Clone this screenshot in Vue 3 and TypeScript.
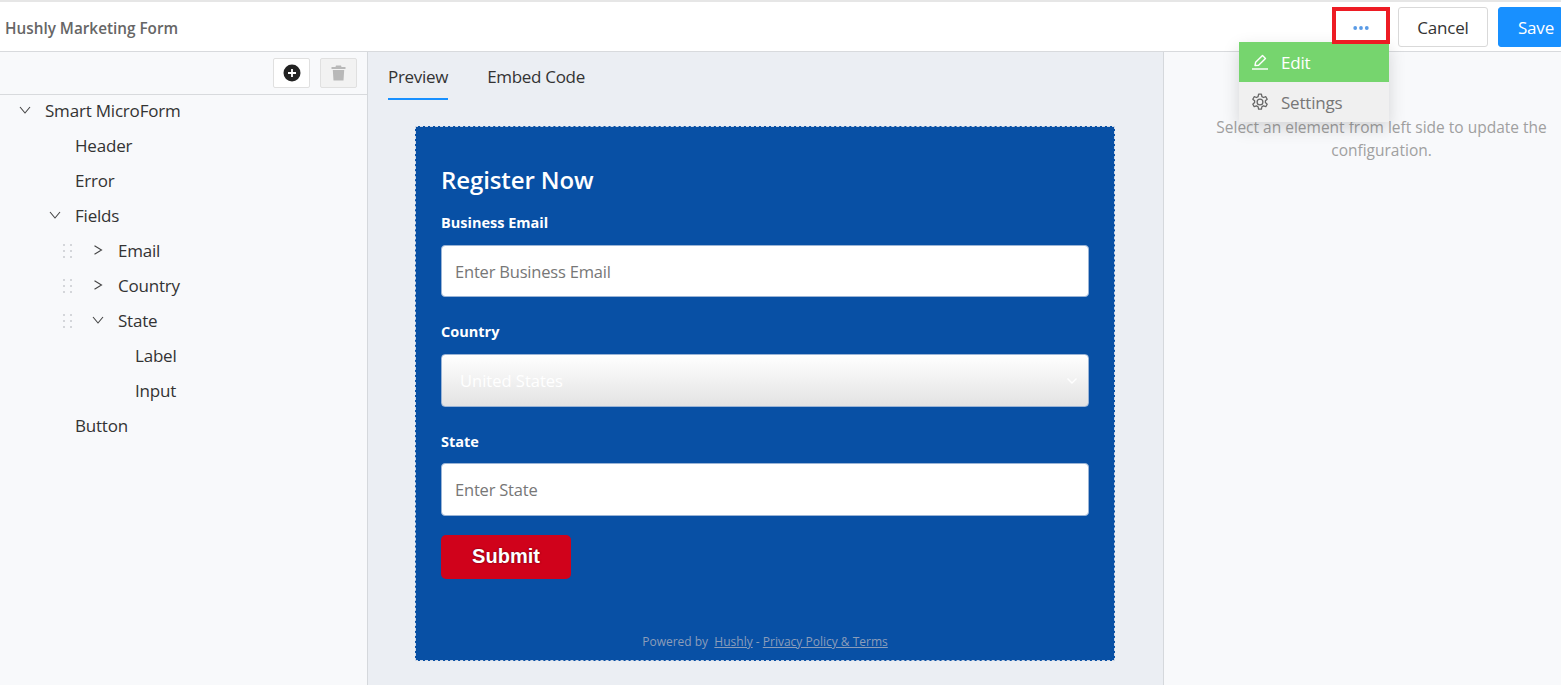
<script setup lang="ts">
interface TreeRow {
  label: string;
  indent: number;
  arrow?: "down" | "right";
  drag?: boolean;
}

const rows: TreeRow[] = [
  { label: "Smart MicroForm", indent: 45, arrow: "down" },
  { label: "Header", indent: 75 },
  { label: "Error", indent: 75 },
  { label: "Fields", indent: 75, arrow: "down" },
  { label: "Email", indent: 118, arrow: "right", drag: true },
  { label: "Country", indent: 118, arrow: "right", drag: true },
  { label: "State", indent: 118, arrow: "down", drag: true },
  { label: "Label", indent: 135 },
  { label: "Input", indent: 135 },
  { label: "Button", indent: 75 },
];
</script>

<template>
  <div class="page">
    <header class="topbar">
      <div class="title">Hushly Marketing Form</div>
      <div class="actions">
        <button class="more">
          <svg width="16" height="4" viewBox="0 0 16 4"><circle cx="2.2" cy="2" r="1.9" /><circle cx="8" cy="2" r="1.9" /><circle cx="13.8" cy="2" r="1.9" /></svg>
        </button>
        <button class="btn">Cancel</button>
        <button class="btn primary">Save</button>
      </div>
    </header>

    <div class="body">
      <aside class="sidebar">
        <div class="toolbar">
          <button class="tool">
            <svg width="18" height="18" viewBox="0 0 18 18">
              <circle cx="9" cy="9" r="8.5" fill="#222" />
              <path d="M9 5v8M5 9h8" stroke="#fff" stroke-width="1.8" />
            </svg>
          </button>
          <button class="tool disabled">
            <svg width="15" height="16" viewBox="0 0 15 16" fill="#b8b8b8">
              <path d="M4.5 2 5 0.5h5l.5 1.5H14.5v2H.5v-2zM1.8 5h11.4l-.7 10.5H2.5z" />
            </svg>
          </button>
        </div>
        <ul class="tree">
          <li v-for="row in rows" :key="row.label" class="row" :style="{ paddingLeft: row.indent + 'px' }">
            <svg v-if="row.drag" class="drag" width="12" height="16" viewBox="0 0 12 16" fill="#d4d6da">
              <rect x="1" y="1" width="2" height="2" /><rect x="8" y="1" width="2" height="2" />
              <rect x="1" y="7" width="2" height="2" /><rect x="8" y="7" width="2" height="2" />
              <rect x="1" y="13" width="2" height="2" /><rect x="8" y="13" width="2" height="2" />
            </svg>
            <svg v-if="row.arrow" class="arrow" :style="{ left: row.indent - 26 + 'px' }" width="12" height="12" viewBox="0 0 12 12" fill="none" stroke="#444" stroke-width="1.1">
              <path v-if="row.arrow === 'down'" d="M1 3 6 9 11 3" />
              <path v-else d="M2.5 1.8 9.5 6 2.5 10.2" />
            </svg>
            {{ row.label }}
          </li>
        </ul>
      </aside>

      <main class="center">
        <nav class="tabs">
          <span class="tab active">Preview</span>
          <span class="tab">Embed Code</span>
        </nav>
        <section class="form">
          <h2>Register Now</h2>
          <label>Business Email</label>
          <div class="input">Enter Business Email</div>
          <label class="next">Country</label>
          <div class="select">
            <span>United States</span>
            <svg width="12" height="8" viewBox="0 0 12 8" fill="none" stroke="#fff" stroke-width="1.4"><path d="M1.5 1.5 6 6l4.5-4.5" /></svg>
          </div>
          <label class="next short">State</label>
          <div class="input tall">Enter State</div>
          <button class="submit">Submit</button>
          <p class="powered">Powered by &nbsp;<u>Hushly</u> - <u>Privacy Policy &amp; Terms</u></p>
        </section>
      </main>

      <aside class="config">
        <p>Select an element from left side to update the configuration.</p>
      </aside>
    </div>

    <div class="menu">
      <div class="item on">
        <svg width="18" height="18" viewBox="0 0 18 18" fill="none" stroke="#fff" stroke-width="1.4">
          <path d="M4 12.5 4.6 9.3 11.5 2.4l3 3L7.6 12.3z" stroke-linejoin="round" />
          <path d="M1 16h16" />
        </svg>
        Edit
      </div>
      <div class="item">
        <svg width="18" height="18" viewBox="0 0 18 18" fill="none" stroke="#666" stroke-width="1.3">
          <path d="M7.6 1.2h2.8l.5 2.4 1.6.9 2.3-.8 1.4 2.5-1.8 1.6v1.8l1.8 1.6-1.4 2.5-2.3-.8-1.6.9-.5 2.4H7.6l-.5-2.4-1.6-.9-2.3.8-1.4-2.5 1.8-1.6V7.8L1.8 6.2l1.4-2.5 2.3.8 1.6-.9z" stroke-linejoin="round" />
          <circle cx="9" cy="9" r="2.9" />
        </svg>
        Settings
      </div>
    </div>
  </div>
</template>

<style>
html,
body {
  margin: 0;
  overflow: hidden;
}
</style>

<style scoped>
.page {
  width: 1561px;
  height: 685px;
  position: relative;
  overflow: hidden;
  display: flex;
  flex-direction: column;
  font-family: "Open Sans", "Noto Sans", sans-serif;
  color: #333;
  background: #f8f9fb;
}

button {
  font-family: inherit;
}

.topbar {
  height: 49px;
  flex: none;
  background: #fff;
  border-top: 2px solid #e6e6e6;
  border-bottom: 1px solid #d8dadd;
  display: flex;
  align-items: flex-start;
  justify-content: space-between;
}

.title {
  padding: 17px 0 0 5px;
  font-size: 15.3px;
  line-height: 19px;
  font-weight: 600;
  color: #666;
}

.actions {
  display: flex;
  flex: none;
  padding-top: 5px;
}

.more {
  position: relative;
  z-index: 2;
  flex: none;
  width: 58px;
  height: 37px;
  box-sizing: border-box;
  border: 4px solid #ed1c24;
  background: #fff;
  padding: 4px 0 0;
  margin-right: 8px;
  display: flex;
  align-items: center;
  justify-content: center;
}

.more svg {
  fill: #5a9be6;
}

.btn {
  flex: none;
  width: 90px;
  height: 40px;
  box-sizing: border-box;
  border: 1px solid #d9d9d9;
  border-radius: 3px;
  background: #fff;
  color: #333;
  font-size: 17px;
  letter-spacing: -0.2px;
  margin-right: 10px;
  padding: 0;
}

.btn.primary {
  width: 63px;
  background: #1890ff;
  border-color: #1890ff;
  color: #fff;
  text-align: left;
  padding-left: 19px;
  margin-right: 0;
  border-radius: 3px 0 0 3px;
}

.body {
  flex: 1;
  display: flex;
  min-height: 0;
}

.sidebar {
  width: 367px;
  flex: none;
  border-right: 1px solid #d5d8dc;
  background: #f8f9fb;
}

.toolbar {
  height: 43px;
  box-sizing: border-box;
  border-bottom: 1px solid #d8dadd;
  display: flex;
  justify-content: flex-end;
  align-items: flex-start;
  gap: 10px;
  padding: 6px 10px 0 0;
}

.tool {
  width: 37px;
  height: 30px;
  padding: 0;
  background: #fff;
  border: 1px solid #e0e0e0;
  border-radius: 2px;
  display: flex;
  align-items: center;
  justify-content: center;
}

.tool.disabled {
  background: #f2f2f2;
}

.tree {
  list-style: none;
  margin: 0;
  padding: 0;
}

.row {
  position: relative;
  height: 35px;
  line-height: 31px;
  font-size: 17px;
  letter-spacing: -0.2px;
  color: #333;
}

.arrow {
  position: absolute;
  top: 9px;
}

.drag {
  position: absolute;
  left: 62px;
  top: 8px;
}

.center {
  width: 795px;
  flex: none;
  background: #ebeef3;
  border-right: 1px solid #d5d8dc;
}

.tabs {
  display: flex;
  gap: 39px;
  height: 48px;
  padding-left: 20px;
}

.tab {
  height: 48px;
  box-sizing: border-box;
  padding-top: 12px;
  line-height: 25px;
  font-size: 17px;
  letter-spacing: -0.3px;
  color: #333;
}

.tab.active {
  border-bottom: 2px solid #1890ff;
}

.form {
  width: 700px;
  height: 535px;
  box-sizing: border-box;
  margin: 26px 0 0 47px;
  padding: 34px 25px 0;
  background: #0850a5;
  border: 1px dashed #cfd8e6;
  color: #fff;
  display: flex;
  flex-direction: column;
}

h2 {
  margin: 0 0 12px;
  font-size: 24px;
  line-height: 38px;
  font-weight: 600;
  letter-spacing: -0.1px;
}

label {
  font-size: 14.5px;
  line-height: 24px;
  font-weight: 700;
  margin-bottom: 10px;
}

label.next {
  margin-top: 23px;
}

label.short {
  margin-bottom: 9px;
}

.input {
  height: 52px;
  flex: none;
  box-sizing: border-box;
  background: #fff;
  border: 1px solid #9ab4d6;
  border-radius: 4px;
  padding-left: 13px;
  line-height: 52px;
  font-size: 16.5px;
  letter-spacing: -0.2px;
  color: #777;
}

.input.tall {
  height: 53px;
}

.select {
  height: 53px;
  flex: none;
  box-sizing: border-box;
  background: linear-gradient(#fff, #e3e3e3);
  border: 1px solid #9ab4d6;
  border-radius: 4px;
  padding: 0 10px 0 18px;
  display: flex;
  align-items: center;
  justify-content: space-between;
  font-size: 16.5px;
  color: #fff;
}

.submit {
  width: 130px;
  height: 44px;
  flex: none;
  margin-top: 19px;
  padding: 0 0 2px;
  background: #d0021b;
  border: none;
  border-radius: 5px;
  color: #fff;
  font-family: "Liberation Sans", sans-serif;
  font-size: 20px;
  font-weight: 700;
  text-shadow: 0 0 2px rgba(0, 0, 0, 0.6);
}

.powered {
  margin: 55px 0 0;
  text-align: center;
  font-size: 12px;
  line-height: 16px;
  color: #8b9dba;
}

.config {
  flex: 1;
  background: #f8f9fb;
  padding: 64px 11px 0 49px;
}

.config p {
  margin: 0;
  text-align: center;
  font-size: 15.5px;
  line-height: 23px;
  color: #a0a0a0;
}

.menu {
  position: absolute;
  left: 1239px;
  top: 42px;
  width: 150px;
  box-shadow: 0 6px 16px rgba(0, 0, 0, 0.15);
}

.item {
  height: 40px;
  display: flex;
  align-items: center;
  gap: 12px;
  padding-left: 12px;
  background: #f0f0f0;
  color: #777;
  font-size: 17px;
  letter-spacing: -0.2px;
}

.item.on {
  background: #76d56e;
  color: #fff;
}
</style>
